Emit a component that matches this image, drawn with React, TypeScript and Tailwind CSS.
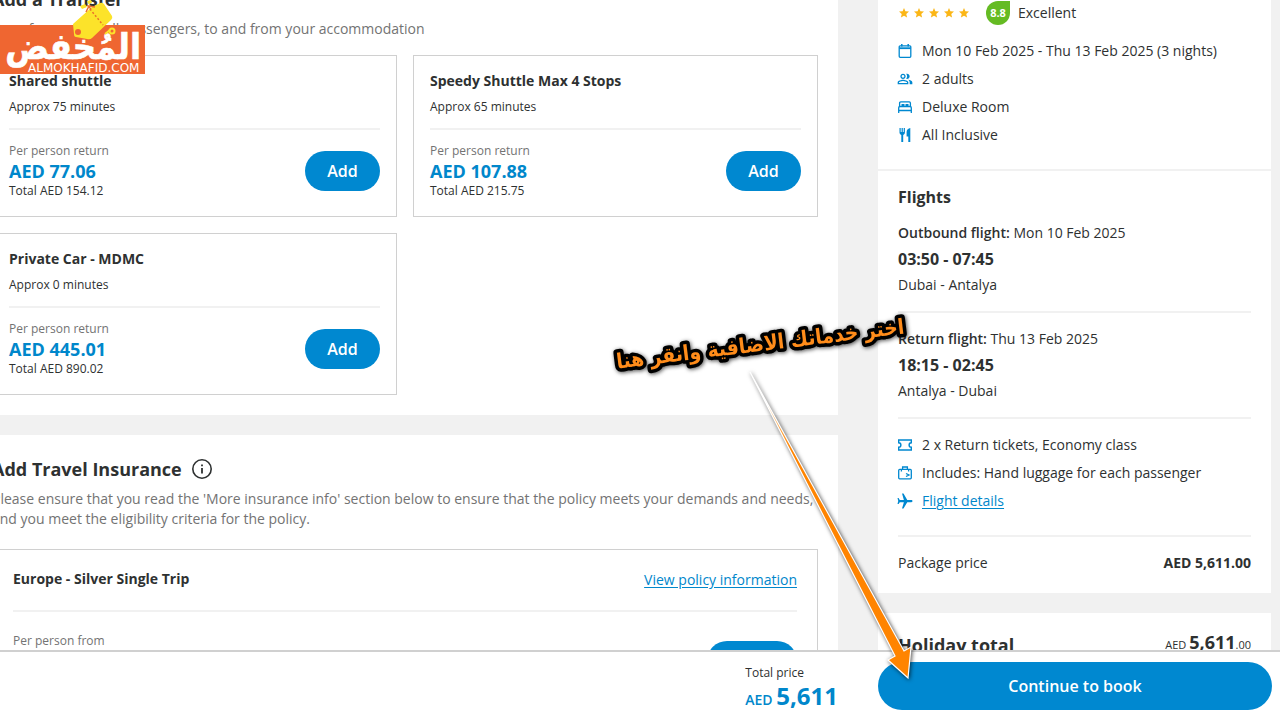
import React from 'react';
import { MdAirplanemodeActive, MdOutlinePeopleAlt, MdStar } from 'react-icons/md';

interface Transfer {
  name: string;
  duration: string;
  price: string;
  total: string;
}

const transfers: Transfer[] = [
  { name: 'Shared shuttle', duration: 'Approx 75 minutes', price: 'AED 77.06', total: 'Total AED 154.12' },
  { name: 'Speedy Shuttle Max 4 Stops', duration: 'Approx 65 minutes', price: 'AED 107.88', total: 'Total AED 215.75' },
  { name: 'Private Car - MDMC', duration: 'Approx 0 minutes', price: 'AED 445.01', total: 'Total AED 890.02' },
];

const CalendarIcon = () => (
  <svg viewBox="0 0 14 14" className="size-3.5 shrink-0" fill="none" stroke="currentColor" strokeWidth="1.3" aria-hidden="true">
    <rect x="1.2" y="1.8" width="11.6" height="11.500" rx="1" />
    <path d="M1.200 4.200h11.600" strokeWidth="1.800" />
    <path d="M3.800 0v2.500M10.200 0v2.500" strokeWidth="1.500" />
  </svg>
);

const BedIcon = () => (
  <svg viewBox="0 0 14 14" className="size-3.5 shrink-0" fill="none" stroke="currentColor" strokeWidth="1.3" aria-hidden="true">
    <path d="M1.600 6.500V3Q1.600 1.800 2.800 1.800h8.400Q12.400 1.800 12.400 3v3.500" />
    <path d="M.7 13V7.800Q.7 6.500 2 6.500h10q1.300 0 1.300 1.300V13M.7 10.500h12.600" />
    <path d="M3.500 5.200h3M7.500 5.200h3" strokeWidth="2.200" />
  </svg>
);

const CutleryIcon = () => (
  <svg viewBox="0 0 14 14" className="size-3.5 shrink-0" fill="currentColor" aria-hidden="true">
    <path d="M1.500 0h1.200v4h.9V0h1.200v4h.9V0h1.200v4.600c0 1.200-.7 2-1.700 2.300V14H3.300V6.900C2.200 6.600 1.500 5.800 1.500 4.600zM12.300 0v14h-2V8.500H8.600V4c0-2.200 1.700-3.800 3.700-4z" />
  </svg>
);

const TicketIcon = () => (
  <svg viewBox="0 0 14 14" className="size-3.5 shrink-0" fill="none" stroke="currentColor" strokeWidth="1.4" aria-hidden="true">
    <path d="M.7 2h12.600v2.800a2.200 2.200 0 0 0 0 4.400V12H.7V9.200a2.200 2.200 0 0 0 0-4.400z" />
  </svg>
);

const LuggageIcon = () => (
  <svg viewBox="0 0 14 14" className="size-3.5 shrink-0" fill="none" stroke="currentColor" strokeWidth="1.3" aria-hidden="true">
    <rect x=".7" y="3.400" width="12.600" height="9.400" rx="1" />
    <path d="M4.600 3.400V1h4.800v2.400M3.400 3.400v2.200M10.600 3.400v2.200M8 7.500l3 1.500-3 1.500" />
  </svg>
);

const InfoIcon = () => (
  <svg viewBox="0 0 20 20" className="size-5" fill="none" stroke="currentColor" strokeWidth="1.6" aria-hidden="true">
    <circle cx="10" cy="10" r="9.200" />
    <path d="M10 9v5.500M10 5.500v1.800" strokeWidth="1.8" />
  </svg>
);

const IconRow: React.FC<{ icon: React.ReactNode; children: React.ReactNode }> = ({ icon, children }) => (
  <li className="flex h-7 items-center gap-2.5">
    <span className="flex w-3.5 shrink-0 justify-center text-[#0088d0]">{icon}</span>
    <span>{children}</span>
  </li>
);

const TransferCard: React.FC<{ transfer: Transfer }> = ({ transfer }) => (
  <article className="border border-[#d0d0d0] p-4">
    <h3 className="text-sm leading-[18px] font-bold">{transfer.name}</h3>
    <p className="mt-2 text-xs leading-[18px]">{transfer.duration}</p>
    <div className="mt-3 flex items-center justify-between border-t-2 border-[#f1f1f1] pt-3">
      <div>
        <p className="text-xs leading-[18px] text-[#737373]">Per person return</p>
        <p className="text-lg leading-[22px] font-bold text-[#0087cb]">{transfer.price}</p>
        <p className="text-xs leading-[18px]">{transfer.total}</p>
      </div>
      <button className="h-10 w-[75px] rounded-full bg-[#0088d0] text-base font-semibold text-white">Add</button>
    </div>
  </article>
);

const Flight: React.FC<{ label: string; date: string; time: string; route: string }> = ({ label, date, time, route }) => (
  <div className="border-b-2 border-[#f1f1f1] pb-4">
    <p><span className="font-semibold">{label}</span> {date}</p>
    <p className="mt-1 text-base leading-6 font-bold">{time}</p>
    <p className="mt-1">{route}</p>
  </div>
);

const Sidebar = () => (
  <aside className="w-[393px] shrink-0 text-sm leading-5">
    <div className="bg-white">
      <div className="border-b-2 border-[#f1f1f1] px-5 pb-5">
        <div className="flex h-[25px] items-center">
          <div className="flex gap-[3px] text-[#fbb616]" role="img" aria-label="5 stars">
            {[1, 2, 3, 4, 5].map((n) => <MdStar key={n} className="size-3" />)}
          </div>
          <span className="ml-4 flex size-6 items-center justify-center rounded-full rounded-tr-none bg-[#65bb23] text-[11px] font-bold text-white">8.8</span>
          <span className="ml-2">Excellent</span>
        </div>
        <ul className="mt-3">
          <IconRow icon={<CalendarIcon />}>Mon 10 Feb 2025 - Thu 13 Feb 2025 (3 nights)</IconRow>
          <IconRow icon={<MdOutlinePeopleAlt className="size-4 shrink-0" />}>2 adults</IconRow>
          <IconRow icon={<BedIcon />}>Deluxe Room</IconRow>
          <IconRow icon={<CutleryIcon />}>All Inclusive</IconRow>
        </ul>
      </div>

      <div className="px-5 pt-3.5 pb-5">
        <h2 className="mb-3.5 text-base leading-6 font-bold">Flights</h2>
        <div className="space-y-4">
          <Flight label="Outbound flight:" date="Mon 10 Feb 2025" time="03:50 - 07:45" route="Dubai - Antalya" />
          <Flight label="Return flight:" date="Thu 13 Feb 2025" time="18:15 - 02:45" route="Antalya - Dubai" />
        </div>
        <ul className="border-b-2 border-[#f1f1f1] pt-3 pb-5">
          <IconRow icon={<TicketIcon />}>2 x Return tickets, Economy class</IconRow>
          <IconRow icon={<LuggageIcon />}>Includes: Hand luggage for each passenger</IconRow>
          <IconRow icon={<MdAirplanemodeActive className="size-[18px] shrink-0 rotate-90" />}>
            <a href="#flight-details" className="text-[#0087cb] underline underline-offset-2">Flight details</a>
          </IconRow>
        </ul>
        <div className="flex justify-between pt-4">
          <span>Package price</span>
          <span className="font-bold">AED 5,611.00</span>
        </div>
      </div>
    </div>

    <div className="mt-5 flex items-start justify-between bg-white p-5">
      <h2 className="text-lg leading-6 font-bold">Holiday total</h2>
      <p className="text-[11px] leading-[18px]">AED <span className="text-lg leading-[18px] font-bold">5,611</span>.00</p>
    </div>
  </aside>
);

const Watermark = () => (
  <svg viewBox="0 0 145 75" className="absolute top-0 left-0 h-[75px] w-[145px]" role="img" aria-label="Almokhafid">
    <rect y="25" width="145" height="49" fill="#ef6631" />
    <path d="M73 24 92 7l8-4q2-1 4 1l8 12q1 2-1 4L92 38q-2 2-5 1l-11-2q-2 0-2-3z" fill="#fce32a" />
    <path d="m80 6 5-2 2 3-5 2zM87 1l4-1 1 3-4 1z" fill="#fce32a" />
    <circle cx="78" cy="32" r="3" fill="#ef6631" />
    <path d="M90 9 103 25" stroke="#e9702a" strokeWidth="1.500" strokeDasharray="2 2" />
    <path d="M86 12l3-6 6 1M87 5l4 4" fill="none" stroke="#e9702a" strokeWidth="1.500" />
    <text x="141" y="59" textAnchor="end" direction="ltr" fill="#fff" stroke="#fff" strokeWidth="0.6" fontSize="36" fontWeight="700" fontFamily="DejaVu Sans Condensed, DejaVu Sans, sans-serif">المُخفض</text>
    <path d="M105 34l5-4" stroke="#fce32a" strokeWidth="2" />
    <circle cx="112" cy="31" r="2.500" fill="none" stroke="#fce32a" strokeWidth="2" />
    <text x="28" y="72" fill="#fff" fontSize="12" fontFamily="DejaVu Sans, sans-serif">ALMOKHAFID.COM</text>
  </svg>
);

// Tutorial callout pointing at the booking button
const Callout = () => (
  <svg viewBox="0 0 320 390" className="pointer-events-none absolute top-[300px] left-[600px] h-[390px] w-80 drop-shadow-[1px_1px_2px_rgba(0,0,0,0.7)]">
    <defs>
      <linearGradient id="arrow" x1="0" y1="0" x2="0" y2="1">
        <stop offset="0" stopColor="#fff" />
        <stop offset="0.12" stopColor="#ffc27a" />
        <stop offset="0.25" stopColor="#ff8400" />
      </linearGradient>
    </defs>
    <path d="M150 72L295 356L288 360L308 378L311 347L304 351Z" fill="url(#arrow)" stroke="#fff" strokeWidth="1.2" />
    <text
      x="161"
      y="51"
      transform="rotate(-7 161 51)"
      textAnchor="middle"
      fontSize="21"
      fontWeight="700"
      fontFamily="DejaVu Sans Condensed, DejaVu Sans, sans-serif"
      fill="#ff8c1a"
      stroke="#000"
      strokeWidth="7"
      strokeLinejoin="round"
      paintOrder="stroke"
    >
      اختر خدماتك الاضافية وانقر هنا
    </text>
  </svg>
);

export default function App() {
  return (
    <div className="relative flex h-screen flex-col overflow-hidden bg-[#f1f1f1] font-['Open_Sans',sans-serif] text-[#2e3131]">
      <main className="-ml-7 flex min-h-0 flex-1 gap-10 overflow-hidden pr-[9px]">
        <div className="-mt-[35px] min-w-0 flex-1 space-y-5">
          <section className="bg-white p-5">
            <h2 className="text-lg leading-7 font-bold">Add a Transfer</h2>
            <p className="mt-1.5 text-sm leading-5 text-[#737373]">Transfers are for all passengers, to and from your accommodation</p>
            <div className="mt-4 grid grid-cols-2 gap-4">
              {transfers.map((t) => <TransferCard key={t.name} transfer={t} />)}
            </div>
          </section>

          <section className="bg-white p-5">
            <div className="flex items-center gap-2.5">
              <h2 className="text-lg leading-7 font-bold">Add Travel Insurance</h2>
              <button aria-label="About travel insurance"><InfoIcon /></button>
            </div>
            <p className="mt-1.5 text-sm leading-5 text-[#737373]">
              Please ensure that you read the 'More insurance info' section below to ensure that the policy meets your demands and needs, and you meet the eligibility criteria for the policy.
            </p>
            <article className="mt-5 border border-[#d0d0d0] p-5">
              <div className="flex items-start justify-between text-sm">
                <h3 className="leading-[18px] font-bold">Europe - Silver Single Trip</h3>
                <a href="#policy" className="leading-5 text-[#0087cb] underline underline-offset-2">View policy information</a>
              </div>
              <div className="mt-5 flex items-start justify-between border-t-2 border-[#f1f1f1] pt-5">
                <p className="text-xs leading-[18px] text-[#737373]">Per person from</p>
                <button className="mt-[9px] h-10 w-[90px] rounded-full bg-[#0088d0] text-base font-semibold text-white">Add</button>
              </div>
            </article>
          </section>
        </div>
        <Sidebar />
      </main>

      <footer className="flex h-[70px] shrink-0 items-center justify-end border-t-2 border-[#d0d0d0] bg-white pr-2">
        <div className="mr-10 pt-1">
          <p className="text-xs leading-5">Total price</p>
          <p className="text-sm leading-[26px] font-semibold text-[#0087cb]">AED <span className="text-2xl leading-[26px] font-bold">5,611</span></p>
        </div>
        <button className="h-12 w-[394px] rounded-full bg-[#0088d0] text-base font-semibold text-white">Continue to book</button>
      </footer>

      <Watermark />
      <Callout />
    </div>
  );
}
